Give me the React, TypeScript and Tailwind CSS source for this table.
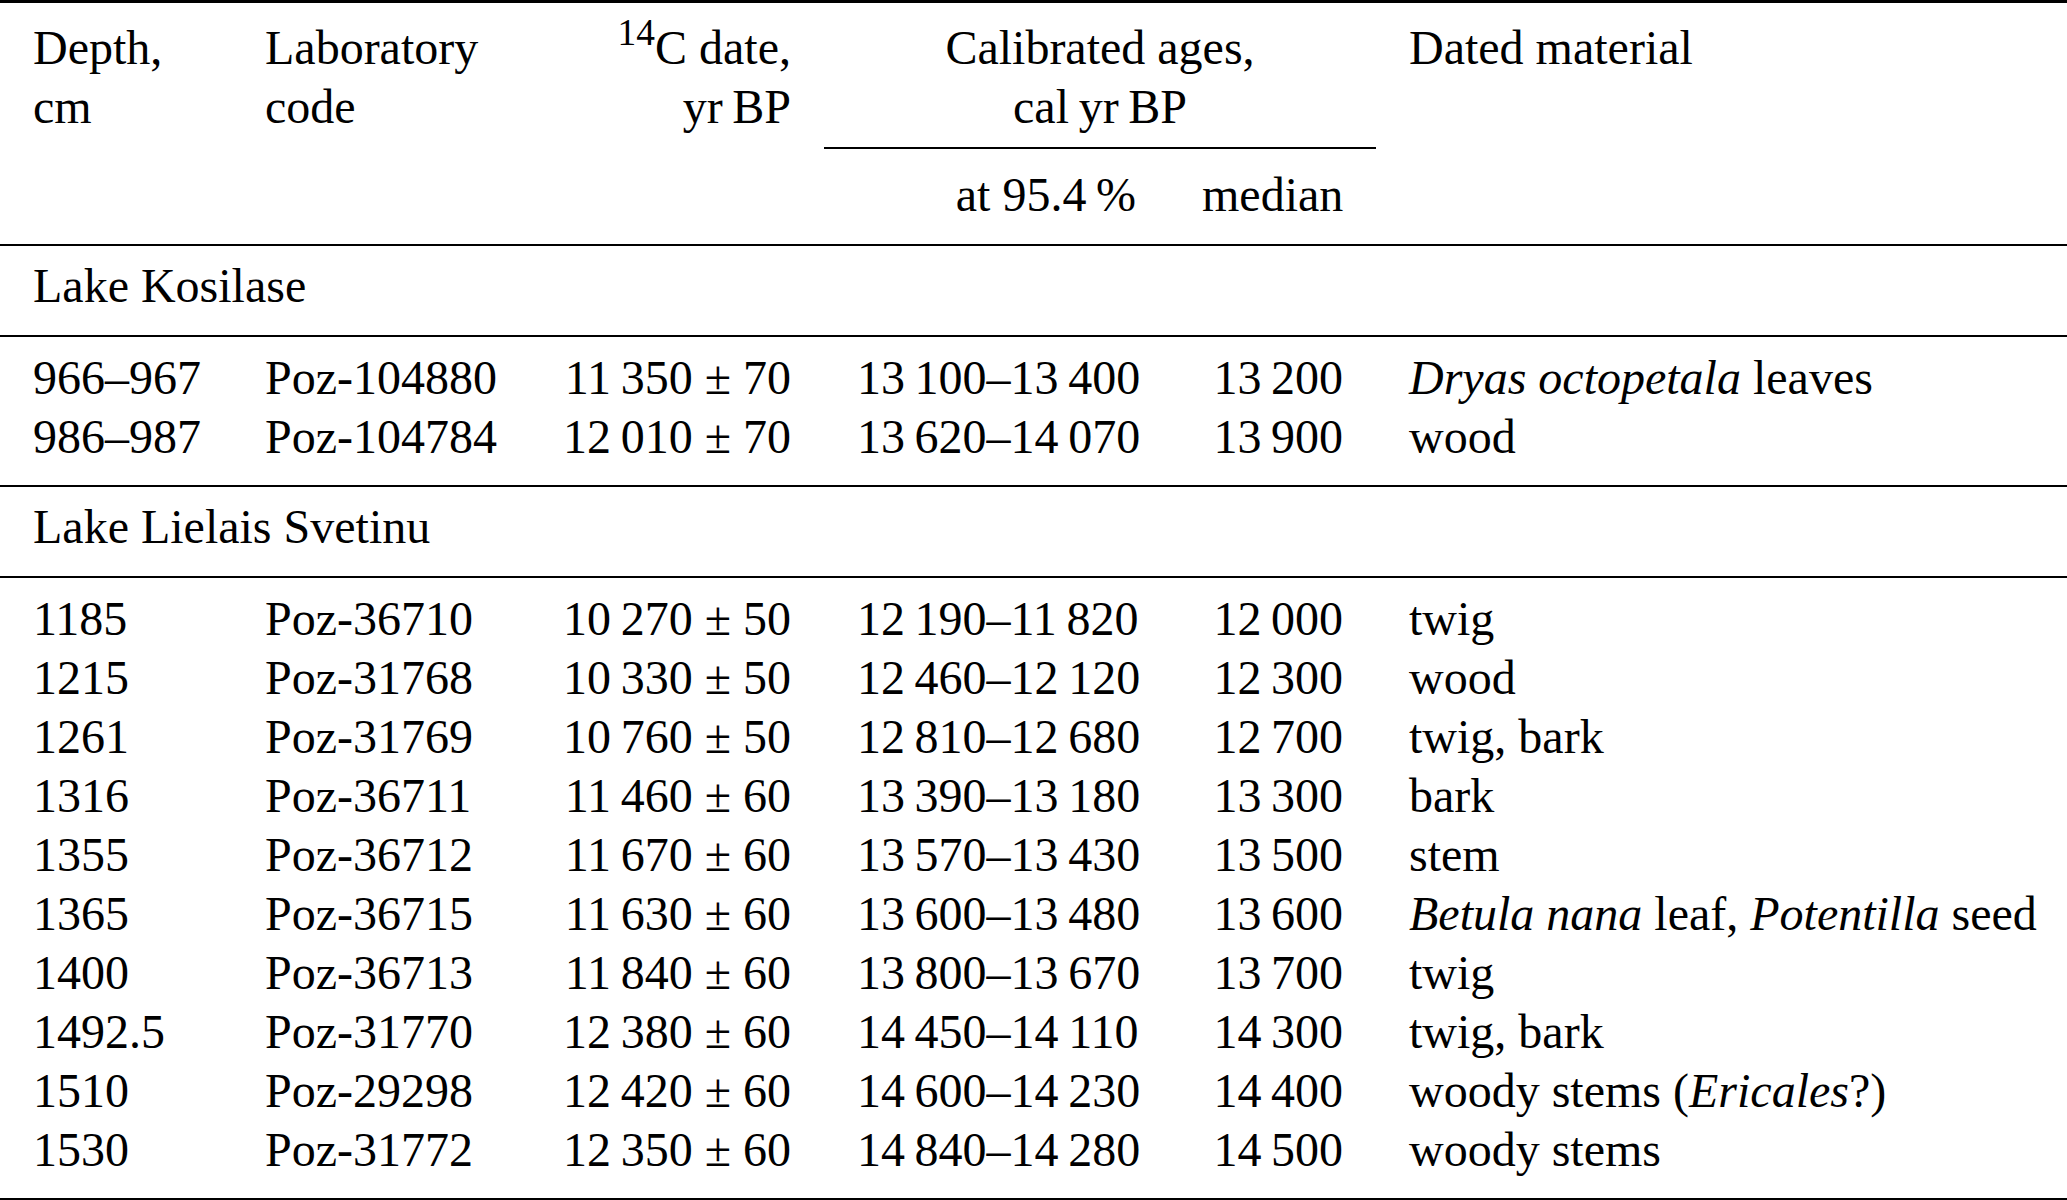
import React from 'react';

type Row = {
  depth: string;
  code: string;
  date: string;
  err: string;
  range: string;
  median: string;
  material: React.ReactNode;
};

const T = '\u2009';

const kosilase: Row[] = [
  { depth: '966–967', code: 'Poz-104880', date: `11${T}350`, err: '70', range: `13${T}100–13${T}400`, median: `13${T}200`, material: <><i>Dryas octopetala</i> leaves</> },
  { depth: '986–987', code: 'Poz-104784', date: `12${T}010`, err: '70', range: `13${T}620–14${T}070`, median: `13${T}900`, material: 'wood' },
];

const svetinu: Row[] = [
  { depth: '1185', code: 'Poz-36710', date: `10${T}270`, err: '50', range: `12${T}190–11${T}820`, median: `12${T}000`, material: 'twig' },
  { depth: '1215', code: 'Poz-31768', date: `10${T}330`, err: '50', range: `12${T}460–12${T}120`, median: `12${T}300`, material: 'wood' },
  { depth: '1261', code: 'Poz-31769', date: `10${T}760`, err: '50', range: `12${T}810–12${T}680`, median: `12${T}700`, material: 'twig, bark' },
  { depth: '1316', code: 'Poz-36711', date: `11${T}460`, err: '60', range: `13${T}390–13${T}180`, median: `13${T}300`, material: 'bark' },
  { depth: '1355', code: 'Poz-36712', date: `11${T}670`, err: '60', range: `13${T}570–13${T}430`, median: `13${T}500`, material: 'stem' },
  { depth: '1365', code: 'Poz-36715', date: `11${T}630`, err: '60', range: `13${T}600–13${T}480`, median: `13${T}600`, material: <><i>Betula nana</i> leaf, <i>Potentilla</i> seed</> },
  { depth: '1400', code: 'Poz-36713', date: `11${T}840`, err: '60', range: `13${T}800–13${T}670`, median: `13${T}700`, material: 'twig' },
  { depth: '1492.5', code: 'Poz-31770', date: `12${T}380`, err: '60', range: `14${T}450–14${T}110`, median: `14${T}300`, material: 'twig, bark' },
  { depth: '1510', code: 'Poz-29298', date: `12${T}420`, err: '60', range: `14${T}600–14${T}230`, median: `14${T}400`, material: <>woody stems (<i>Ericales</i>?)</> },
  { depth: '1530', code: 'Poz-31772', date: `12${T}350`, err: '60', range: `14${T}840–14${T}280`, median: `14${T}500`, material: 'woody stems' },
];

const DataRows: React.FC<{ rows: Row[] }> = ({ rows }) => (
  <div className="border-t-2 border-black pt-[11px] pb-[19px]">
    {rows.map((r, i) => (
      <div key={i} className="grid grid-cols-[232px_297px_295px_345px_207px_1fr] whitespace-nowrap">
        <div className="px-[33px]">{r.depth}</div>
        <div className="px-[33px]">{r.code}</div>
        <div className="px-[33px] text-right">
          {r.date}
          <span className="mx-[0.25em]">±</span>
          {r.err}
        </div>
        <div className="px-[33px] text-right">{r.range}</div>
        <div className="px-[33px] text-right">{r.median}</div>
        <div className="px-[33px]">{r.material}</div>
      </div>
    ))}
  </div>
);

const SiteTitle: React.FC<{ name: string }> = ({ name }) => (
  <div className="border-t-2 border-black pt-[10px] pb-[20px] px-[33px]">{name}</div>
);

export default function App() {
  return (
    <div className="w-[2067px] h-[1200px] bg-white text-black font-['Liberation_Serif','Times_New_Roman',serif] text-[48px] leading-[59px]">
      <div className="border-t-[3px] border-black grid grid-cols-[232px_297px_295px_345px_207px_1fr] grid-rows-[auto_auto] whitespace-nowrap">
        <div className="row-start-1 row-span-2 col-start-1 px-[33px] pt-[15px]">
          Depth,
          <br />
          cm
        </div>
        <div className="row-start-1 row-span-2 col-start-2 px-[33px] pt-[15px]">
          Laboratory
          <br />
          code
        </div>
        <div className="row-start-1 row-span-2 col-start-3 px-[33px] pt-[15px] text-right">
          <sup className="text-[0.78em] top-[-0.5em]">14</sup>C date,
          <br />
          yr{T}BP
        </div>
        <div className="row-start-1 col-start-4 col-span-2 pt-[15px] pb-[11px] border-b-2 border-black text-center">
          Calibrated ages,
          <br />
          cal{T}yr{T}BP
        </div>
        <div className="row-start-1 row-span-2 col-start-6 px-[33px] pt-[15px]">Dated material</div>
        <div className="row-start-2 col-start-4 px-[33px] pt-[16px] pb-[20px] text-right">at 95.4{T}%</div>
        <div className="row-start-2 col-start-5 px-[33px] pt-[16px] pb-[20px] text-right">median</div>
      </div>
      <SiteTitle name="Lake Kosilase" />
      <DataRows rows={kosilase} />
      <SiteTitle name="Lake Lielais Svetinu" />
      <div className="border-b-[3px] border-black">
        <DataRows rows={svetinu} />
      </div>
    </div>
  );
}
